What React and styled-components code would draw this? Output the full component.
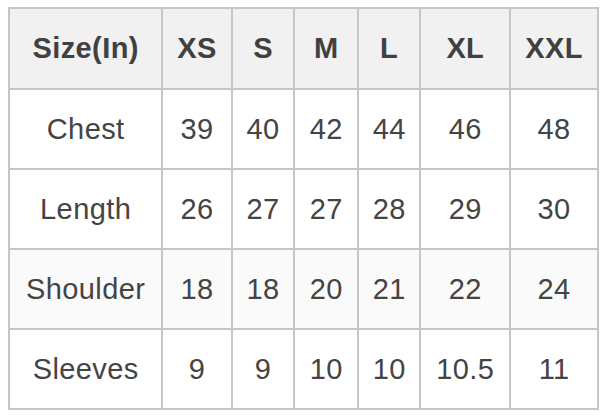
import React from "react";
import styled, { createGlobalStyle } from "styled-components";

const Global = createGlobalStyle`
  html, body { margin: 0; padding: 0; background: #ffffff; }
  body { padding: 7px 8px; font-family: "Liberation Sans", Arial, sans-serif; }
`;

const Table = styled.table`
  border-collapse: collapse;
  table-layout: fixed;
  width: 591px;
  color: #444444;
  font-family: "Liberation Sans", Arial, sans-serif;
  font-size: 29px;
  letter-spacing: 0.4px;
`;

const HeadRow = styled.tr`
  height: 81px;
  background: #f1f1f1;
`;

const Row = styled.tr`
  height: 80px;
  background: ${(p) => (p.$tint ? "#fafafa" : "#ffffff")};
`;

const HeadCell = styled.th`
  border: 2px solid #c6c6c6;
  font-weight: 700;
  text-align: center;
  padding: 0;
  color: #404040;
`;

const Cell = styled.td`
  border: 2px solid #c6c6c6;
  text-align: center;
  padding: 0;
  font-weight: 400;
`;

const widths = [152, 69, 62, 63, 62, 89, 87];
const headers = ["Size(In)", "XS", "S", "M", "L", "XL", "XXL"];
const rows = [
  ["Chest", "39", "40", "42", "44", "46", "48"],
  ["Length", "26", "27", "27", "28", "29", "30"],
  ["Shoulder", "18", "18", "20", "21", "22", "24"],
  ["Sleeves", "9", "9", "10", "10", "10.5", "11"],
];

export default function App() {
  return (
    <>
      <Global />
      <Table>
        <colgroup>
          {widths.map((w, i) => (
            <col key={i} style={{ width: w }} />
          ))}
        </colgroup>
        <tbody>
          <HeadRow>
            {headers.map((h) => (
              <HeadCell key={h}>{h}</HeadCell>
            ))}
          </HeadRow>
          {rows.map((r, i) => (
            <Row key={r[0]} $tint={i === 2}>
              {r.map((c, j) => (
                <Cell key={j}>{c}</Cell>
              ))}
            </Row>
          ))}
        </tbody>
      </Table>
    </>
  );
}
